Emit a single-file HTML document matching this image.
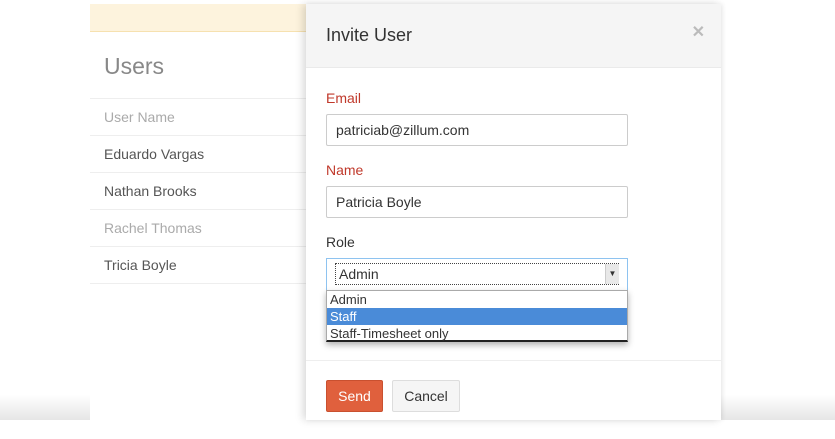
<!DOCTYPE html>
<html><head><style>
*{margin:0;padding:0;box-sizing:border-box}
body{width:835px;height:439px;background:#fff;font-family:"Liberation Sans",sans-serif;position:relative;overflow:hidden}
.shadowl{position:absolute;left:0;top:395px;width:835px;height:25px;background:linear-gradient(#fff,#e6e6e6);}
.page{position:absolute;left:90px;top:4px;width:216px;height:416px;background:#fff}
.banner{position:absolute;left:0;top:0;width:100%;height:28px;background:#fdf3dd;border-bottom:1px solid #f6e1b0}
.title{position:absolute;left:14px;top:49px;font-size:23px;color:#888}
.row{position:absolute;left:0;width:216px;height:37px;border-top:1px solid #eee;font-size:14px;color:#555;padding:10px 14px}
.modal{position:absolute;left:306px;top:4px;width:415px;height:416px;background:#fff;box-shadow:-3px 0 8px rgba(0,0,0,.15),2px 0 4px rgba(0,0,0,.05)}
.mh{height:64px;background:#f5f5f5;border-bottom:1px solid #eaeaea;padding:21px 20px;font-size:18px;color:#333}
.x{position:absolute;right:16px;top:18px;color:#bbb;font-size:16px;font-weight:bold}
.lab{position:absolute;left:20px;font-size:14px;color:#c0392b}
.inp{position:absolute;left:20px;width:302px;height:32px;border:1px solid #ccc;border-radius:2px;font-size:14px;color:#333;padding:7px 9px}
.sel{position:absolute;left:20px;top:254px;width:302px;height:33px;border:1px solid #8ec3f0;padding:4px 8px}
.sel .in{border:1px dotted #444;height:22px;font-size:14px;color:#333;padding:2px 3px;position:relative}
.arr{position:absolute;right:-1px;top:0;width:14px;height:20px;background:#e8e8e8;border-left:1px solid #ccc;font-size:8px;text-align:center;line-height:20px}
.dd{position:absolute;left:20px;top:286px;width:302px;height:52px;border:1px solid #aaa;border-bottom:2px solid #222;background:#fff;box-shadow:0 3px 6px rgba(0,0,0,.3);font-size:13px;color:#333}
.dd div{height:17px;padding:0 3px;line-height:17px}
.dd .hl{background:#4a8bd8;color:#fff}
.sep{position:absolute;left:0;top:356px;width:100%;border-top:1px solid #eee}
.send{position:absolute;left:20px;top:376px;width:57px;height:32px;background:#e0603d;border:1px solid #c9502f;border-radius:2px;color:#fff;font-size:14px;text-align:center;line-height:30px}
.cancel{position:absolute;left:86px;top:376px;width:68px;height:32px;background:#f5f5f5;border:1px solid #ddd;border-radius:2px;color:#333;font-size:14px;text-align:center;line-height:30px}
</style></head><body>
<div class="shadowl"></div>
<div class="page">
<div class="banner"></div>
<div class="title">Users</div>
<div class="row" style="top:94px;color:#aaa">User Name</div>
<div class="row" style="top:131px">Eduardo Vargas</div>
<div class="row" style="top:168px">Nathan Brooks</div>
<div class="row" style="top:205px;color:#aaa">Rachel Thomas</div>
<div class="row" style="top:242px">Tricia Boyle</div>
<div class="row" style="top:279px;height:1px;padding:0"></div>
</div>
<div class="modal">
<div class="mh">Invite User</div><div class="x">✕</div>
<div class="lab" style="top:86px">Email</div>
<div class="inp" style="top:110px">patriciab@zillum.com</div>
<div class="lab" style="top:158px">Name</div>
<div class="inp" style="top:182px">Patricia Boyle</div>
<div class="lab" style="top:230px;color:#333">Role</div>
<div class="sel"><div class="in">Admin<div class="arr">▼</div></div></div>
<div class="dd"><div>Admin</div><div class="hl">Staff</div><div>Staff-Timesheet only</div></div>
<div class="sep"></div>
<div class="send">Send</div>
<div class="cancel">Cancel</div>
</div>
</body></html>
